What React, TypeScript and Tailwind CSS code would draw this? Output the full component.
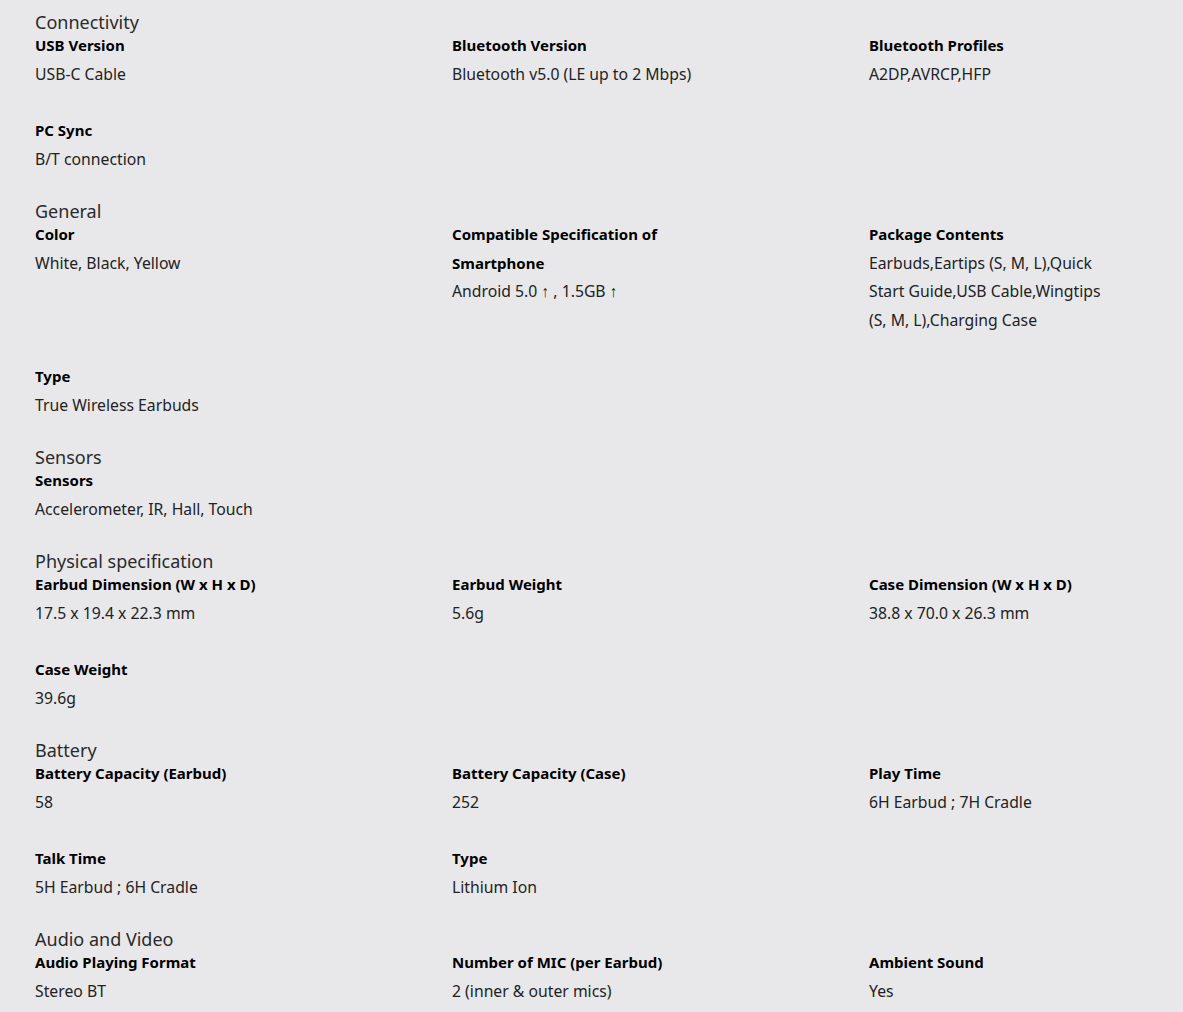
import React from "react";

type Item = { label: string; value: string };
type Section = { title: string; items: Item[] };

const sections: Section[] = [
  {
    title: "Connectivity",
    items: [
      { label: "USB Version", value: "USB-C Cable" },
      { label: "Bluetooth Version", value: "Bluetooth v5.0 (LE up to 2 Mbps)" },
      { label: "Bluetooth Profiles", value: "A2DP,AVRCP,HFP" },
      { label: "PC Sync", value: "B/T connection" },
    ],
  },
  {
    title: "General",
    items: [
      { label: "Color", value: "White, Black, Yellow" },
      { label: "Compatible Specification of Smartphone", value: "Android 5.0 ↑ , 1.5GB ↑" },
      { label: "Package Contents", value: "Earbuds,Eartips (S, M, L),Quick Start Guide,USB Cable,Wingtips (S, M, L),Charging Case" },
      { label: "Type", value: "True Wireless Earbuds" },
    ],
  },
  {
    title: "Sensors",
    items: [{ label: "Sensors", value: "Accelerometer, IR, Hall, Touch" }],
  },
  {
    title: "Physical specification",
    items: [
      { label: "Earbud Dimension (W x H x D)", value: "17.5 x 19.4 x 22.3 mm" },
      { label: "Earbud Weight", value: "5.6g" },
      { label: "Case Dimension (W x H x D)", value: "38.8 x 70.0 x 26.3 mm" },
      { label: "Case Weight", value: "39.6g" },
    ],
  },
  {
    title: "Battery",
    items: [
      { label: "Battery Capacity (Earbud)", value: "58" },
      { label: "Battery Capacity (Case)", value: "252" },
      { label: "Play Time", value: "6H Earbud ; 7H Cradle" },
      { label: "Talk Time", value: "5H Earbud ; 6H Cradle" },
      { label: "Type", value: "Lithium Ion" },
    ],
  },
  {
    title: "Audio and Video",
    items: [
      { label: "Audio Playing Format", value: "Stereo BT" },
      { label: "Number of MIC (per Earbud)", value: "2 (inner & outer mics)" },
      { label: "Ambient Sound", value: "Yes" },
    ],
  },
];

export default function App() {
  return (
    <div
      className="min-h-[1012px] w-full bg-[#e8e8eb] pl-[35px] pt-[12px] text-[#1c1c1c]"
      style={{ fontFamily: '"Noto Sans", "Open Sans", sans-serif' }}
    >
      {sections.map((s) => (
        <section key={s.title} className="mb-[28px]">
          <h2 className="mb-[-1px] text-[18px] leading-[20px] font-normal text-[#2a2a2a]">{s.title}</h2>
          <div className="grid grid-cols-[417px_417px_1fr] gap-y-[28px]">
            {s.items.map((it, i) => (
              <div key={i} className="max-w-[240px]">
                <div className="text-[15px] leading-[28.5px] font-bold text-black">{it.label}</div>
                <div className="text-[15.75px] leading-[28.5px] text-[#222]">{it.value}</div>
              </div>
            ))}
          </div>
        </section>
      ))}
    </div>
  );
}
